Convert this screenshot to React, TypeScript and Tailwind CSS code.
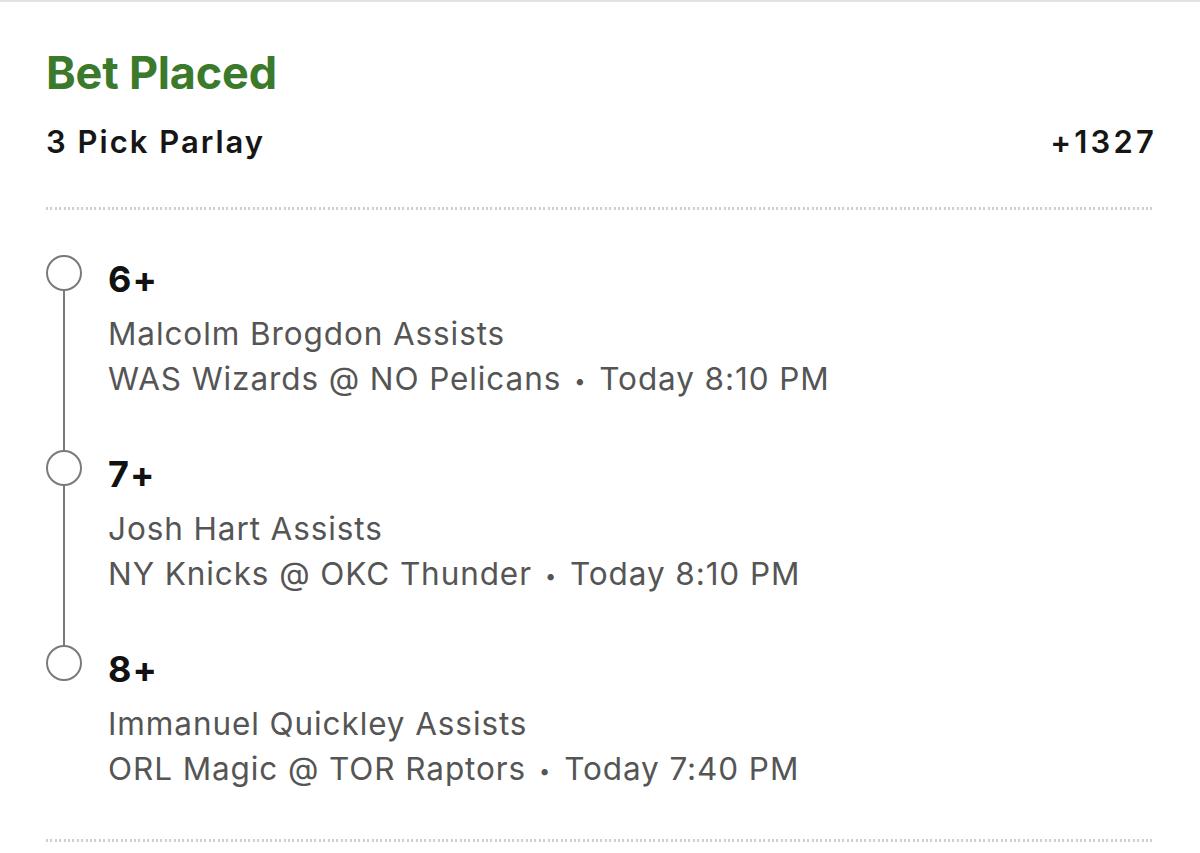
const legs = [
  {
    line: "6+",
    market: "Malcolm Brogdon Assists",
    game: "WAS Wizards @ NO Pelicans",
    time: "Today 8:10 PM",
  },
  {
    line: "7+",
    market: "Josh Hart Assists",
    game: "NY Knicks @ OKC Thunder",
    time: "Today 8:10 PM",
  },
  {
    line: "8+",
    market: "Immanuel Quickley Assists",
    game: "ORL Magic @ TOR Raptors",
    time: "Today 7:40 PM",
  },
];

const Dotted = () => (
  <div className="h-[3px] w-full bg-[repeating-linear-gradient(to_right,#cfcfcf_0_2px,transparent_2px_4.4px)]" />
);

export default function App() {
  return (
    <div className="min-h-screen bg-white font-['Inter','Noto_Sans',sans-serif] border-t-2 border-[#e2e2e2]">
      <div className="px-[46px] pt-[44px]">
        <h1 className="text-[45px] leading-[54px] font-bold text-[#3b7a2b] tracking-[-0.2px]">
          Bet Placed
        </h1>
        <div className="mt-[24px] flex items-center justify-between text-[31px] leading-[36px] font-semibold text-[#161616] tracking-[2px]">
          <span>3 Pick Parlay</span>
          <span className="tracking-[3.2px] mr-[-3px]">+1327</span>
        </div>
        <div className="mt-[47px]">
          <Dotted />
        </div>

        <div className="mt-[45px]">
          {legs.map((leg, i) => {
            const last = i === legs.length - 1;
            return (
              <div key={leg.line} className="flex gap-[26px]">
                <div className="flex w-[36px] flex-col items-center">
                  <div className="h-[36px] w-[36px] rounded-full border-2 border-[#7a7a7a]" />
                  {!last && <div className="w-[2px] flex-1 bg-[#7a7a7a]" />}
                </div>
                <div className={last ? "pt-[6px] pb-[45px]" : "pt-[6px] pb-[46px]"}>
                  <div className="text-[36px] leading-[36px] font-bold text-[#111] tracking-[1px]">
                    {leg.line}
                  </div>
                  <div className="mt-[14px] text-[31.5px] leading-[45px] text-[#555] tracking-[0.9px]">
                    <div>{leg.market}</div>
                    <div>
                      {leg.game}
                      <span className="mx-[13px] text-[20px] align-middle">•</span>
                      {leg.time}
                    </div>
                  </div>
                </div>
              </div>
            );
          })}
        </div>
        <Dotted />
      </div>
    </div>
  );
}
